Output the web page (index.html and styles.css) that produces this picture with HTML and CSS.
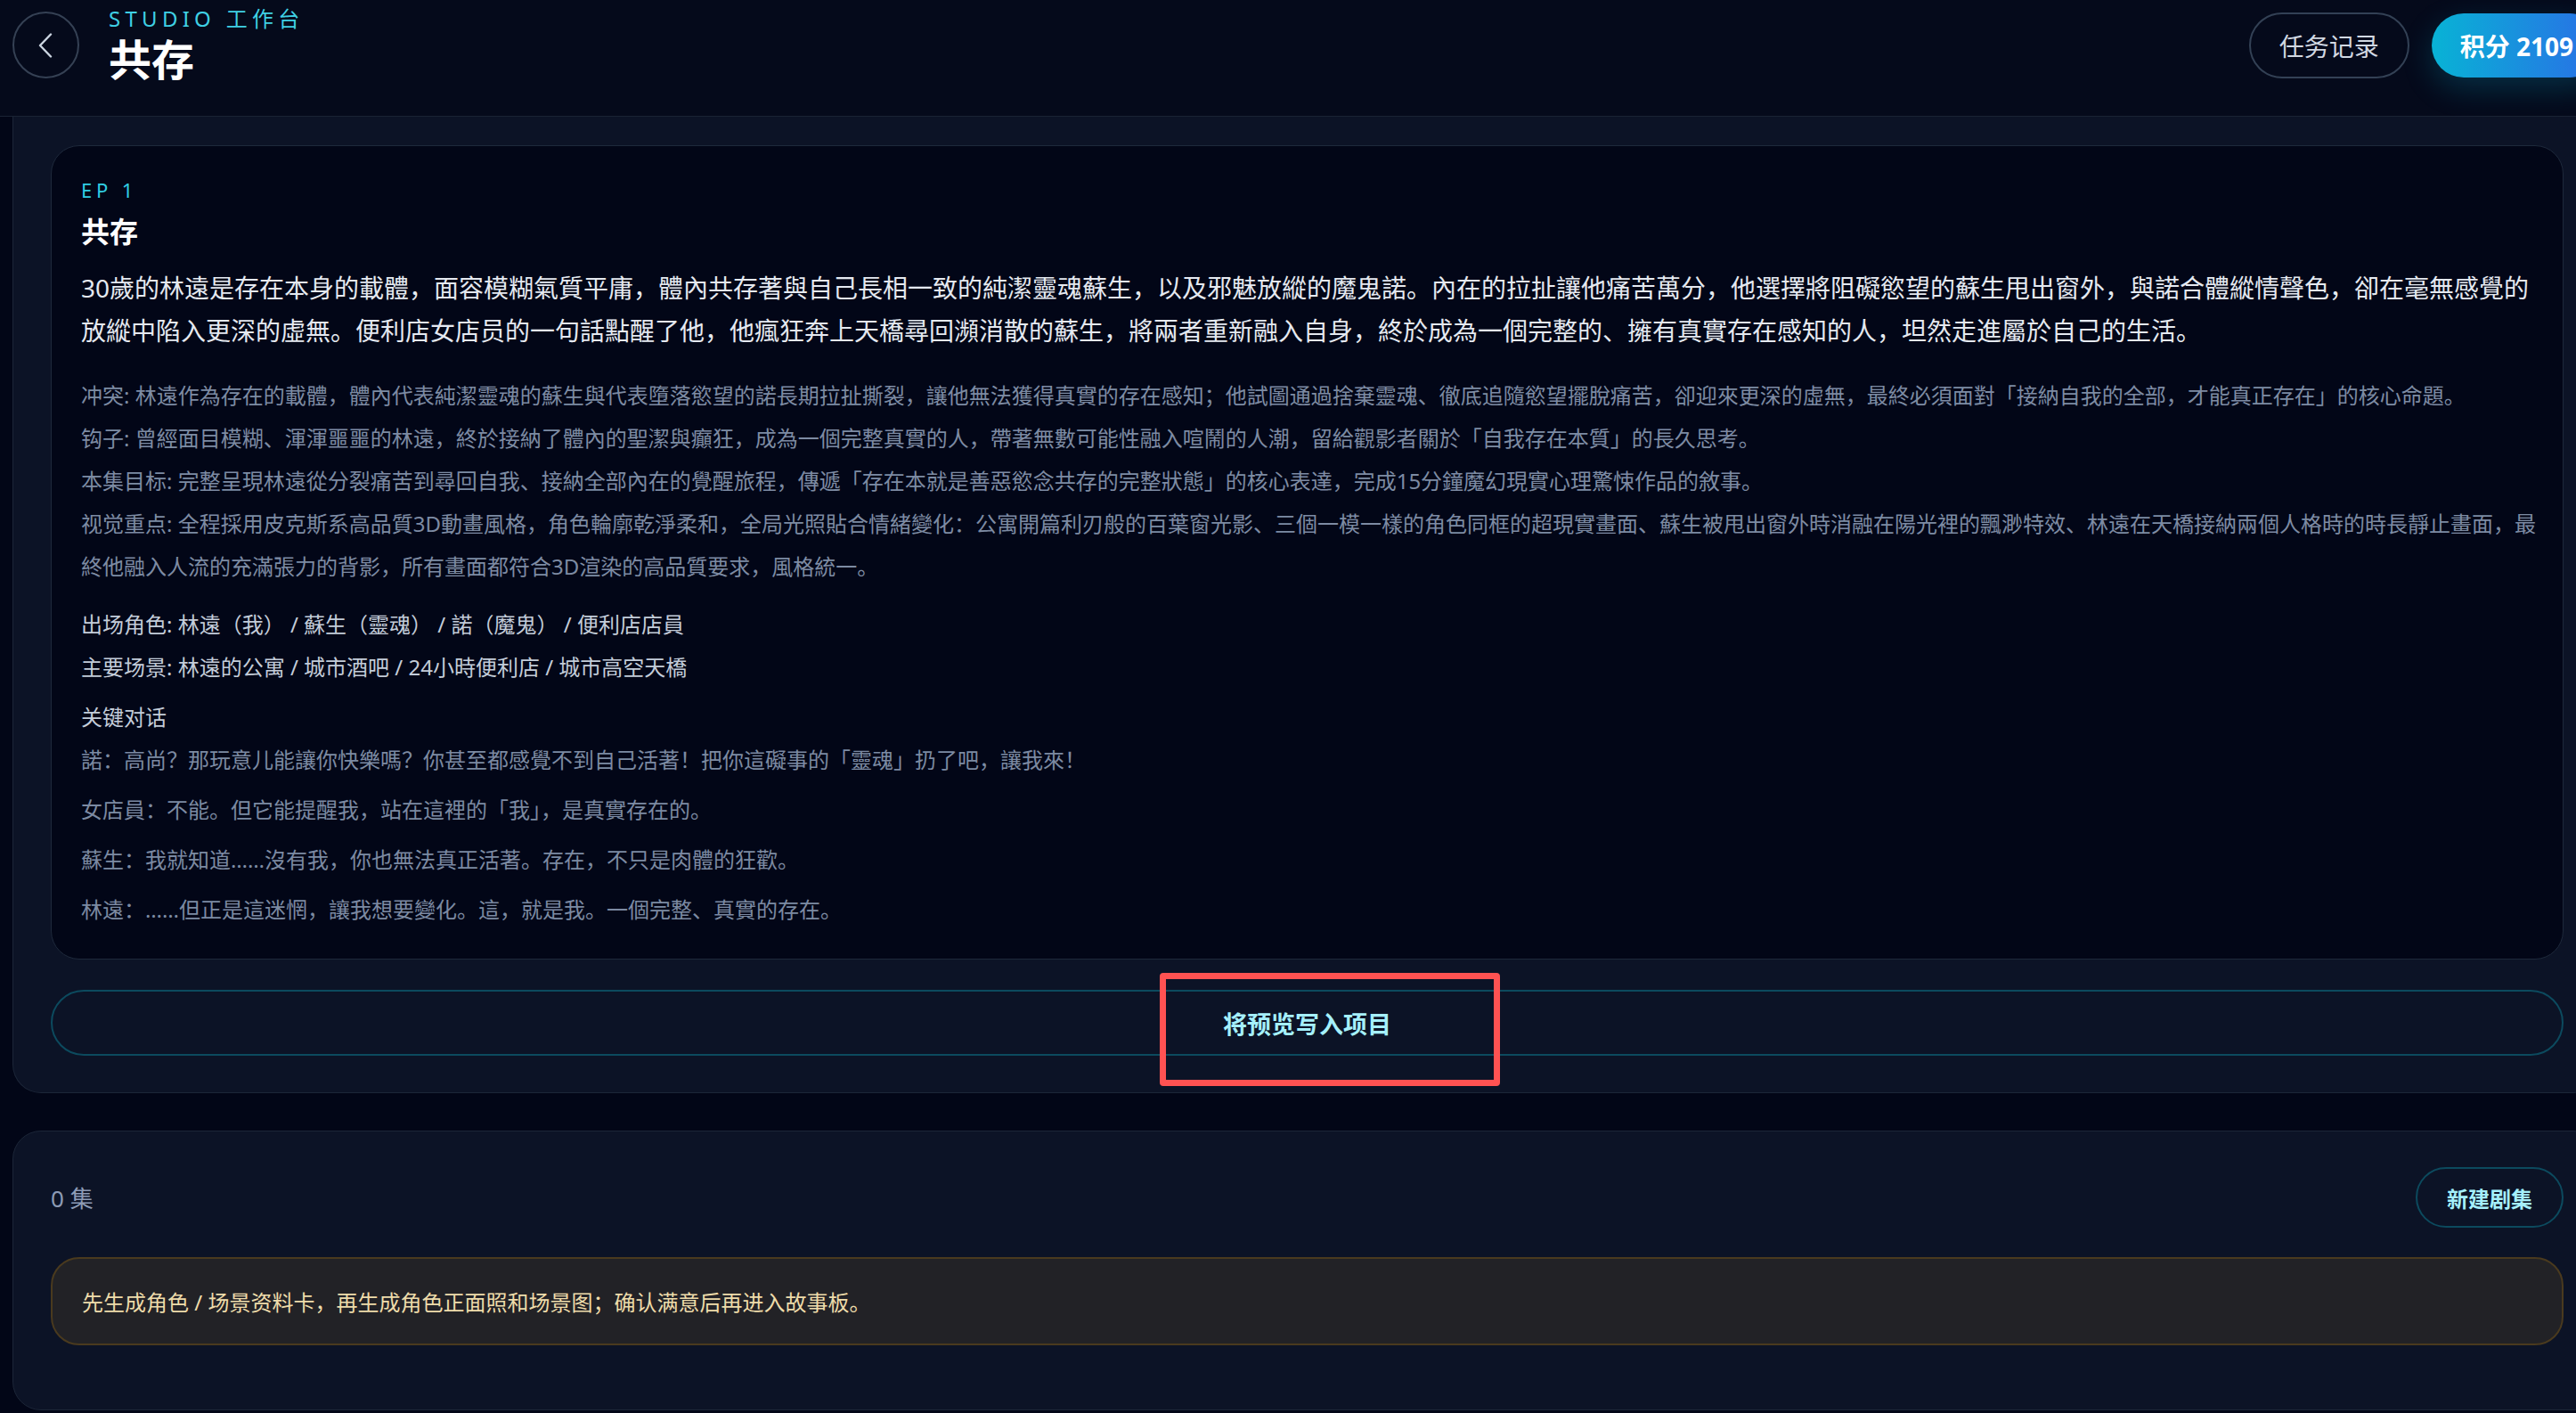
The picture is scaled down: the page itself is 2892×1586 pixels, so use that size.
FILE: index.html
```html
<!DOCTYPE html>
<html lang="zh">
<head>
    <meta charset="UTF-8">
    <meta name="viewport" content="width=device-width, initial-scale=1.0">
    <title>共存 - STUDIO 工作台</title>
    <link rel="stylesheet" href="styles.css">
</head>
<body>
    <div class="page">
        <header class="topbar">
            <div class="topbar-left">
                <button class="back-btn" type="button" aria-label="返回">
                    <svg width="16" height="28" viewBox="0 0 16 28">
                        <polyline points="14,1.5 2,14 14,26.5" fill="none" stroke="#cbd5e1" stroke-width="2.4" stroke-linecap="round" stroke-linejoin="round"/>
                    </svg>
                </button>
                <div class="title-block">
                    <div class="eyebrow">STUDIO 工作台</div>
                    <h1>共存</h1>
                </div>
            </div>
            <div class="topbar-right">
                <button class="ghost-btn" type="button">任务记录</button>
                <button class="points-btn" type="button">积分 2109</button>
            </div>
        </header>

        <main class="content">
            <section class="panel panel-preview">
                <article class="ep-card">
                    <div class="ep-label">EP 1</div>
                    <h2>共存</h2>
                    <p class="summary">30歲的林遠是存在本身的載體，面容模糊氣質平庸，體內共存著與自己長相一致的純潔靈魂蘇生，以及邪魅放縱的魔鬼諾。內在的拉扯讓他痛苦萬分，他選擇將阻礙慾望的蘇生甩出窗外，與諾合體縱情聲色，卻在毫無感覺的放縱中陷入更深的虛無。便利店女店员的一句話點醒了他，他瘋狂奔上天橋尋回瀕消散的蘇生，將兩者重新融入自身，終於成為一個完整的、擁有真實存在感知的人，坦然走進屬於自己的生活。</p>

                    <div class="details">
                        <p>冲突: 林遠作為存在的載體，體內代表純潔靈魂的蘇生與代表墮落慾望的諾長期拉扯撕裂，讓他無法獲得真實的存在感知；他試圖通過捨棄靈魂、徹底追隨慾望擺脫痛苦，卻迎來更深的虛無，最終必須面對「接納自我的全部，才能真正存在」的核心命題。</p>
                        <p>钩子: 曾經面目模糊、渾渾噩噩的林遠，終於接納了體內的聖潔與癲狂，成為一個完整真實的人，帶著無數可能性融入喧鬧的人潮，留給觀影者關於「自我存在本質」的長久思考。</p>
                        <p>本集目标: 完整呈現林遠從分裂痛苦到尋回自我、接納全部內在的覺醒旅程，傳遞「存在本就是善惡慾念共存的完整狀態」的核心表達，完成15分鐘魔幻現實心理驚悚作品的敘事。</p>
                        <p>视觉重点: 全程採用皮克斯系高品質3D動畫風格，角色輪廓乾淨柔和，全局光照貼合情緒變化：公寓開篇利刃般的百葉窗光影、三個一模一樣的角色同框的超現實畫面、蘇生被甩出窗外時消融在陽光裡的飄渺特效、林遠在天橋接納兩個人格時的時長靜止畫面，最終他融入人流的充滿張力的背影，所有畫面都符合3D渲染的高品質要求，風格統一。</p>
                    </div>

                    <div class="meta">
                        <p>出场角色: 林遠（我） / 蘇生（靈魂） / 諾（魔鬼） / 便利店店員</p>
                        <p>主要场景: 林遠的公寓 / 城市酒吧 / 24小時便利店 / 城市高空天橋</p>
                    </div>

                    <div class="dialogue">
                        <h3>关键对话</h3>
                        <p>諾：高尚？那玩意儿能讓你快樂嗎？你甚至都感覺不到自己活著！把你這礙事的「靈魂」扔了吧，讓我來！</p>
                        <p>女店員：不能。但它能提醒我，站在這裡的「我」，是真實存在的。</p>
                        <p>蘇生：我就知道……沒有我，你也無法真正活著。存在，不只是肉體的狂歡。</p>
                        <p>林遠：……但正是這迷惘，讓我想要變化。這，就是我。一個完整、真實的存在。</p>
                    </div>
                </article>

                <div class="write-wrap">
                    <button class="write-btn" type="button">将预览写入项目</button>
                    <span class="highlight"></span>
                </div>
            </section>

            <section class="panel panel-episodes">
                <div class="episodes-head">
                    <span class="ep-count">0 集</span>
                    <button class="new-btn" type="button">新建剧集</button>
                </div>
                <div class="notice">先生成角色 / 场景资料卡，再生成角色正面照和场景图；确认满意后再进入故事板。</div>
            </section>
        </main>
    </div>
</body>
</html>
```

FILE: styles.css
```css
/* Base */
html, body {
    margin: 0;
    overflow: hidden;
}

body {
    background: #020617;
    color: #e2e8f0;
    font-family: "Noto Sans", "Noto Sans CJK SC", sans-serif;
}

button {
    font-family: inherit;
    cursor: pointer;
}

.page {
    width: 2935px;
}

/* Top bar */
.topbar {
    display: flex;
    justify-content: space-between;
    align-items: flex-start;
    height: 131px;
    box-sizing: border-box;
    padding: 13px 14px 0;
    background: #050a1b;
    border-bottom: 1px solid #1a2334;
}

.topbar-left {
    display: flex;
    align-items: center;
    gap: 33px;
    height: 75px;
}

.back-btn {
    width: 75px;
    height: 75px;
    border-radius: 50%;
    border: 2px solid #354154;
    background: transparent;
    display: flex;
    align-items: center;
    justify-content: center;
    padding: 0 2px 0 0;
}

.title-block {
    display: flex;
    flex-direction: column;
    gap: 4px;
}

.eyebrow {
    font-size: 24px;
    line-height: 28px;
    letter-spacing: 0.22em;
    color: #3fd0e4;
}

.title-block h1 {
    margin: 0;
    font-size: 48px;
    line-height: 56px;
    font-weight: 700;
    color: #ffffff;
}

.topbar-right {
    display: flex;
    align-items: center;
    gap: 25px;
    height: 75px;
}

.ghost-btn {
    height: 74px;
    padding: 0 32px;
    border-radius: 37px;
    border: 2px solid #334155;
    background: transparent;
    color: #d1d8e2;
    font-size: 28px;
}

.points-btn {
    height: 72px;
    padding: 0 32px;
    border-radius: 36px;
    border: none;
    background: linear-gradient(90deg, #08b3d5, #2a6ee6);
    color: #ffffff;
    font-size: 28px;
    font-weight: 700;
    box-shadow: 0 12px 34px rgba(8, 179, 213, 0.22);
}

/* Panels */
.content {
    padding: 0 14px;
    display: flex;
    flex-direction: column;
    gap: 42px;
}

.panel {
    background: #0c1326;
    border: 1px solid #1c2638;
    border-radius: 32px;
    padding: 40px 42px 72px;
}

.panel-preview {
    border-top: none;
    border-radius: 0 0 32px 32px;
    padding: 32px 42px 41px;
}

/* Episode card */
.ep-card {
    background: #020617;
    border: 1px solid #1e293b;
    border-radius: 32px;
    padding: 34px 26px 31px 33px;
}

.ep-label {
    font-size: 22px;
    line-height: 30px;
    letter-spacing: 0.22em;
    color: #30cde3;
}

.ep-card h2 {
    margin: 10px 0 0;
    font-size: 32px;
    line-height: 44px;
    font-weight: 700;
    color: #ffffff;
}

.summary {
    margin: 17px 0 0;
    font-size: 28px;
    line-height: 48px;
    color: #e5e9f0;
}

.details {
    margin-top: 25px;
}

.details p {
    margin: 0;
    font-size: 24px;
    line-height: 48px;
    color: #7d8ba3;
}

.meta {
    margin-top: 17px;
}

.meta p {
    margin: 0;
    font-size: 24px;
    line-height: 48px;
    color: #c3ccd9;
}

.dialogue {
    margin-top: 8px;
}

.dialogue h3 {
    margin: 0;
    font-size: 24px;
    line-height: 48px;
    font-weight: 400;
    color: #c3ccd9;
}

.dialogue p {
    margin: 0 0 8px;
    font-size: 24px;
    line-height: 48px;
    color: #7c8aa2;
}

.dialogue p:last-child {
    margin-bottom: 0;
}

/* Write to project */
.write-wrap {
    position: relative;
    margin-top: 34px;
}

.write-btn {
    display: block;
    width: 100%;
    height: 74px;
    border-radius: 37px;
    border: 2px solid #0c4a5e;
    background: transparent;
    color: #a5f0fb;
    font-size: 27px;
    font-weight: 700;
}

.highlight {
    position: absolute;
    left: calc(50% - 166px);
    top: -19px;
    width: 382px;
    height: 127px;
    box-sizing: border-box;
    border: 7px solid #ff5252;
    border-radius: 4px;
    pointer-events: none;
}

/* Episodes */
.episodes-head {
    display: flex;
    justify-content: space-between;
    align-items: center;
}

.ep-count {
    font-size: 26px;
    color: #8d9bb5;
}

.new-btn {
    height: 68px;
    padding: 0 33px;
    border-radius: 34px;
    border: 2px solid #0c4a5e;
    background: transparent;
    color: #a5f0fb;
    font-size: 24px;
    font-weight: 700;
}

.notice {
    margin-top: 33px;
    height: 99px;
    box-sizing: border-box;
    display: flex;
    align-items: center;
    padding: 0 33px;
    background: #222226;
    border: 2px solid #4a3a1e;
    border-radius: 32px;
    font-size: 24px;
    color: #eedcaa;
}
```
